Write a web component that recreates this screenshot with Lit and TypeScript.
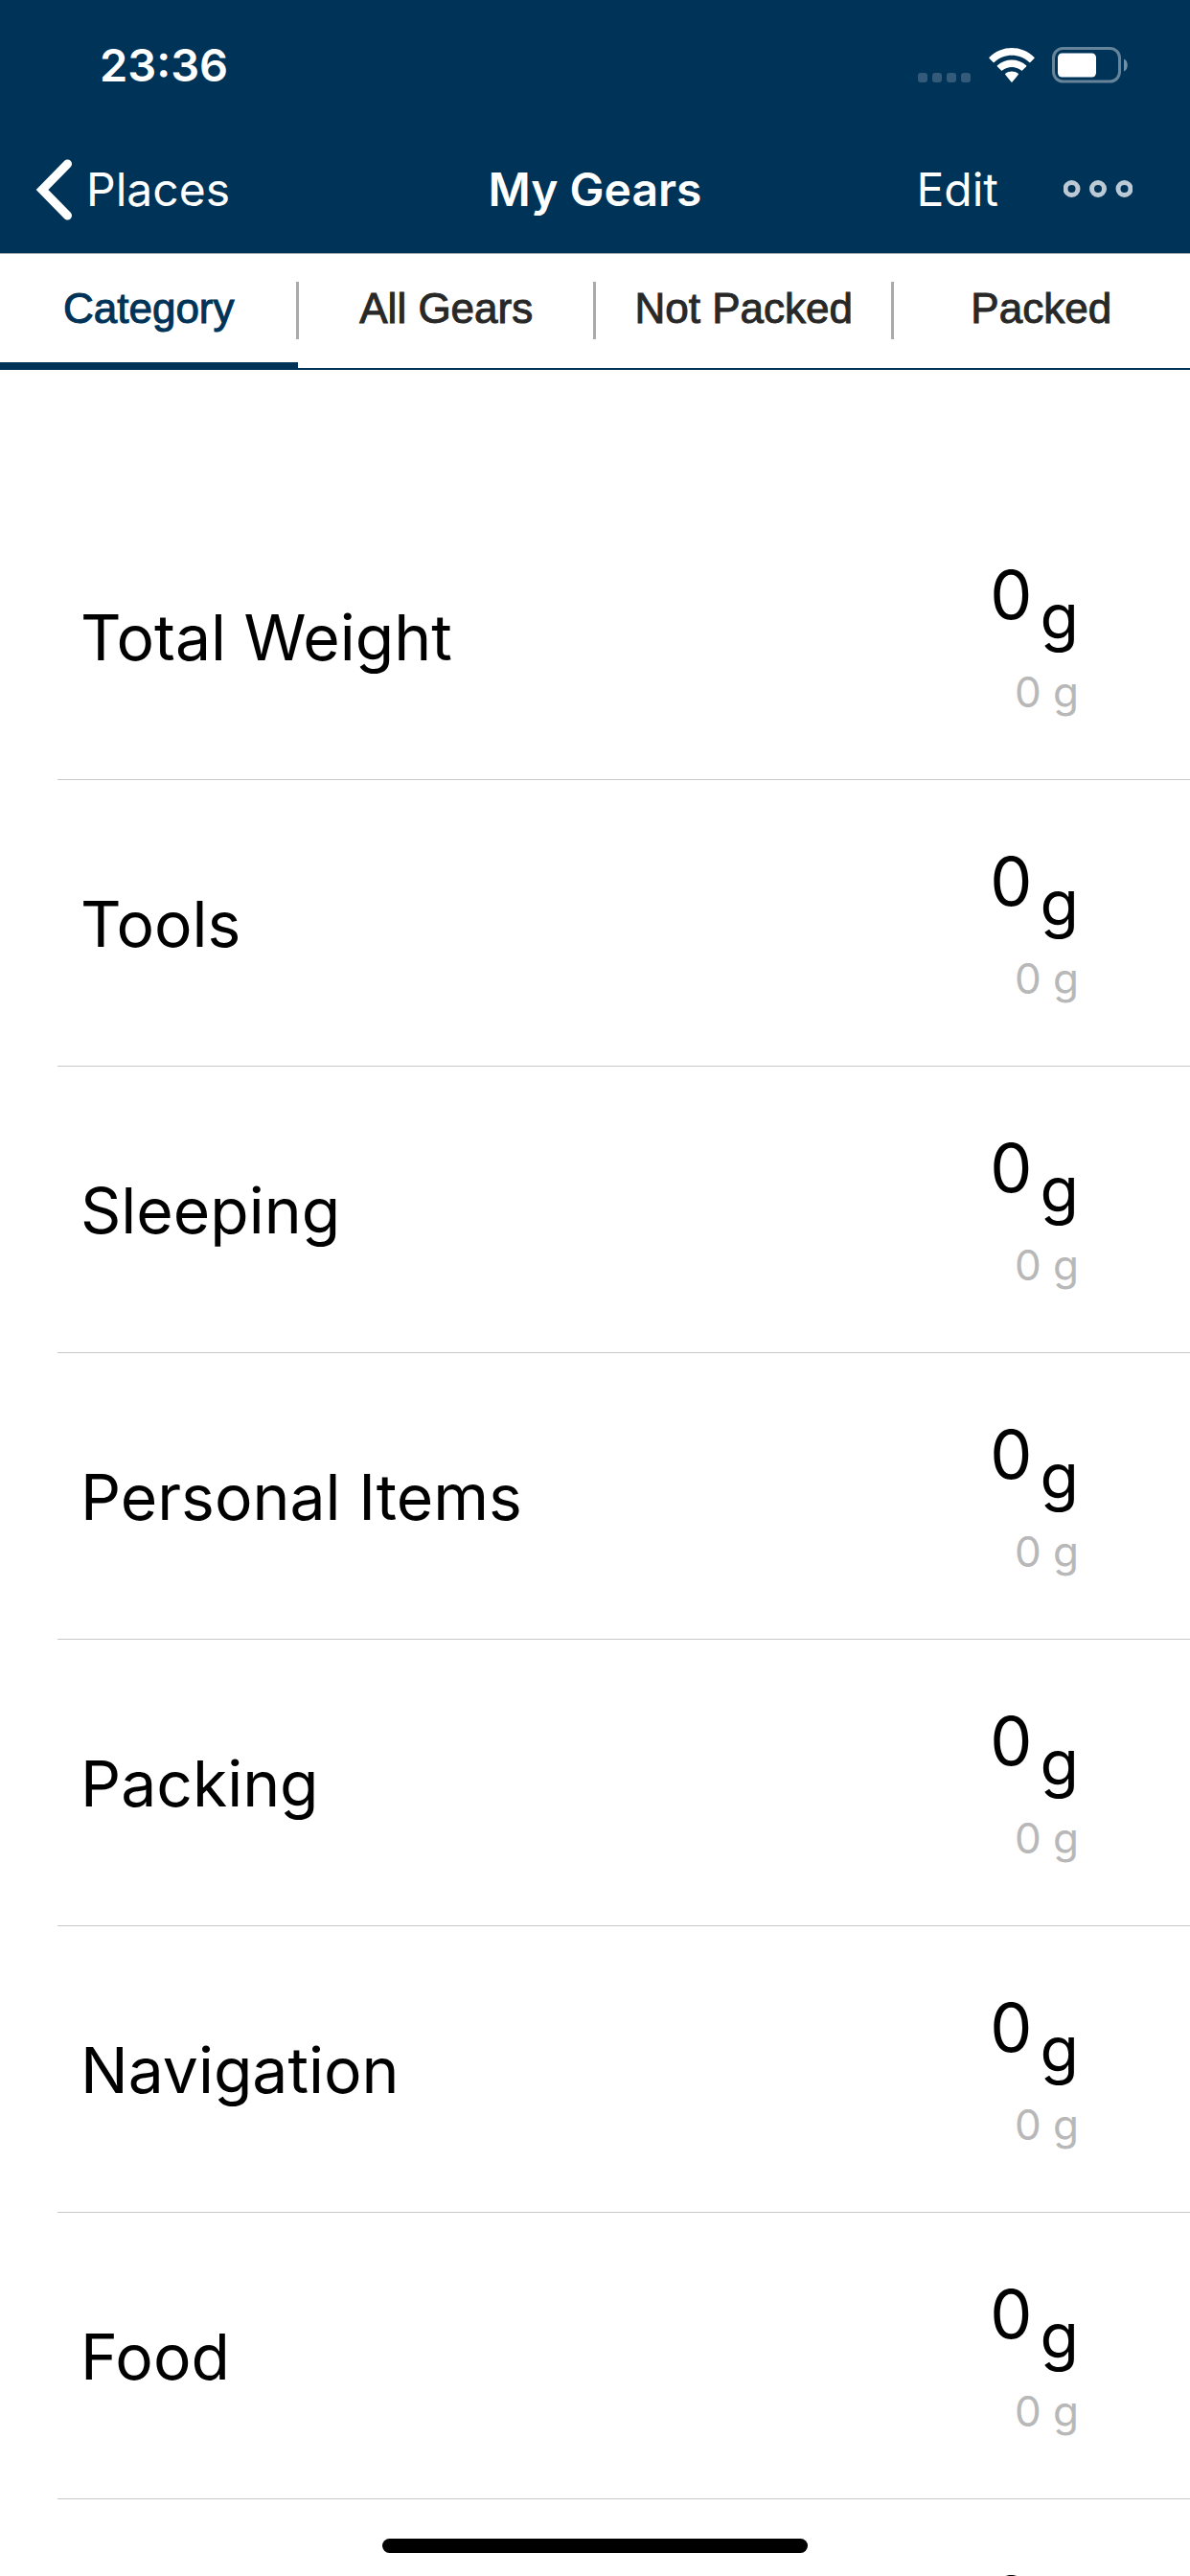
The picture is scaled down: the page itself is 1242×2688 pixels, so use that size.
import { LitElement, html, css, svg } from "lit";
import { customElement, property, state } from "lit/decorators.js";
import { classMap } from "lit/directives/class-map.js";

interface Gear {
  name: string;
  total: number;
  packed: number;
}

const CATEGORIES: Gear[] = [
  "Total Weight",
  "Tools",
  "Sleeping",
  "Personal Items",
  "Packing",
  "Navigation",
  "Food",
  "",
].map((name) => ({ name, total: 0, packed: 0 }));

const TABS = ["Category", "All Gears", "Not Packed", "Packed"];

@customElement("status-bar")
export class StatusBar extends LitElement {
  static styles = css`
    :host {
      display: flex;
      justify-content: space-between;
      align-items: center;
      height: 132px;
      padding: 4px 64px 0 104px;
      box-sizing: border-box;
    }
    .time {
      font-size: 47px;
      line-height: 60px;
      font-weight: 600;
    }
    .icons {
      display: flex;
      align-items: center;
      gap: 18px;
    }
    .icon {
      display: block;
    }
  `;

  render() {
    return html`
      <span class="time">23:36</span>
      <div class="icons">
        <svg class="icon" width="56" height="38" viewBox="0 0 56 38" fill="#fff" fill-opacity="0.2" aria-hidden="true">
          ${[0, 15, 30, 45].map((x) => svg`<rect x=${x} y="27" width="10" height="10" rx="3"></rect>`)}
        </svg>
        <svg class="icon" width="48" height="38" viewBox="0 0 48 38" fill="#fff" aria-hidden="true">
          <path d="M0.6 10.8 C13.5 -2.3 34.5 -2.3 47.4 10.8 Q47.9 11.4 47.4 11.9 L43.4 15.9 Q42.8 16.4 42.2 15.9 C31.9 6.4 16.1 6.4 5.8 15.9 Q5.2 16.4 4.6 15.9 L0.6 11.9 Q0.1 11.4 0.6 10.8Z"></path>
          <path d="M8.9 19.3 C17.4 11.7 30.6 11.7 39.1 19.3 Q39.6 19.9 39.1 20.4 L35 24.5 Q34.5 25 33.9 24.5 C28.2 19.7 19.8 19.7 14.1 24.5 Q13.5 25 13 24.5 L8.9 20.4 Q8.4 19.9 8.9 19.3Z"></path>
          <path d="M17.3 27.7 C21.2 24.6 26.8 24.6 30.7 27.7 Q31.2 28.3 30.7 28.9 L24.6 36.5 Q24 37.1 23.4 36.5 L17.3 28.9 Q16.8 28.3 17.3 27.7Z"></path>
        </svg>
        <svg class="icon" width="80" height="38" viewBox="0 0 80 38" aria-hidden="true">
          <rect x="1.5" y="1.5" width="69" height="34.5" rx="10" fill="none" stroke="#fff" stroke-opacity="0.4" stroke-width="3"></rect>
          <rect x="6" y="6.5" width="40" height="25" rx="4.5" fill="#fff"></rect>
          <path d="M75 12.5 C80 14.5 80 23.5 75 25.5Z" fill="#fff" fill-opacity="0.45"></path>
        </svg>
      </div>
    `;
  }
}

@customElement("nav-bar")
export class NavBar extends LitElement {
  static styles = css`
    :host {
      display: grid;
      grid-template-columns: 1fr auto 1fr;
      align-items: center;
      height: 132px;
      padding: 0 36px;
      box-sizing: border-box;
      font-size: 48px;
      line-height: 60px;
    }
    .back,
    .action {
      display: flex;
      align-items: center;
      border: 0;
      padding: 0;
      background: none;
      color: inherit;
      font: inherit;
      text-decoration: none;
    }
    .back {
      gap: 12px;
      justify-self: start;
    }
    .title {
      margin: 0;
      font-size: 48px;
      line-height: 60px;
      font-weight: 600;
    }
    .actions {
      display: flex;
      align-items: center;
      justify-content: flex-end;
      gap: 68px;
      padding-right: 24px;
    }
    .icon {
      display: block;
    }
  `;

  render() {
    return html`
      <a class="back" href="#places">
        <svg class="icon" width="42" height="66" viewBox="0 0 42 66" fill="none" stroke="#fff" stroke-width="9" stroke-linecap="round" aria-hidden="true">
          <path d="M34.5 6 L8 33 L34.5 60"></path>
        </svg>
        <span>Places</span>
      </a>
      <h1 class="title">My Gears</h1>
      <div class="actions">
        <button class="action" type="button">Edit</button>
        <button class="action" type="button" aria-label="More">
          <svg class="icon" width="72" height="22" viewBox="0 0 72 22" fill="none" stroke="#bccad5" stroke-width="5" aria-hidden="true">
            ${[8.5, 36, 63.5].map((x) => svg`<circle cx=${x} cy="10" r="6.5"></circle>`)}
          </svg>
        </button>
      </div>
    `;
  }
}

@customElement("gear-row")
export class GearRow extends LitElement {
  static styles = css`
    :host {
      display: flex;
      align-items: center;
      justify-content: space-between;
      height: 299px;
      margin-left: 60px;
      padding: 0 116px 0 24px;
      box-sizing: border-box;
      border-bottom: 1px solid #c8c7cc;
    }
    .name {
      padding-top: 2px;
      font-size: 66px;
      line-height: 84px;
    }
    .weights {
      display: flex;
      flex-direction: column;
      flex: 1;
      align-items: flex-end;
      gap: 10px;
    }
    .total {
      display: flex;
      gap: 8px;
      font-size: 70px;
      line-height: 84px;
    }
    .unit {
      padding-top: 22px;
      font-size: 66px;
    }
    .packed {
      color: #b8b8b8;
      font-size: 44px;
      line-height: 54px;
    }
  `;

  @property({ attribute: false }) gear!: Gear;

  render() {
    return html`
      <span class="name">${this.gear.name}</span>
      <div class="weights">
        <span class="total"><span>${this.gear.total}</span><span class="unit">g</span></span>
        <span class="packed">${this.gear.packed} g</span>
      </div>
    `;
  }
}

@customElement("app-root")
export class AppRoot extends LitElement {
  static styles = css`
    :host {
      display: flex;
      flex-direction: column;
      position: relative;
      height: 100vh;
      overflow: hidden;
      background: #fff;
      color: #000;
      font-family: Inter, "Liberation Sans", sans-serif;
    }
    .header {
      flex: none;
      background: #003358;
      color: #fff;
      border-bottom: 1px solid #a0a8ae;
    }
    .tabs {
      display: grid;
      grid-template-columns: repeat(4, 1fr);
      flex: none;
      height: 121px;
      box-sizing: border-box;
      border-bottom: 2px solid #003358;
    }
    .tab {
      display: flex;
      align-items: center;
      justify-content: center;
      position: relative;
      padding: 0 0 6px;
      border: 0;
      background: none;
      color: #282828;
      font-family: "Liberation Sans", Arial, sans-serif;
      font-size: 44px;
      line-height: 50px;
      -webkit-text-stroke: 1px currentColor;
    }
    .tab + .tab::before {
      content: "";
      position: absolute;
      left: -2px;
      top: 29px;
      width: 3px;
      height: 60px;
      background: #aaa;
    }
    .selected {
      color: #003358;
    }
    .selected::after {
      content: "";
      position: absolute;
      left: 0;
      right: 0;
      bottom: 0;
      height: 6px;
      background: #003358;
    }
    .list {
      flex: 1;
      min-height: 0;
      margin: 0;
      padding: 129px 0 0;
      list-style: none;
      overflow-y: auto;
      scrollbar-width: none;
    }
    .home {
      position: absolute;
      left: 50%;
      bottom: 24px;
      width: 444px;
      height: 15px;
      margin-left: -222px;
      border-radius: 8px;
      background: #000;
    }
  `;

  @state() private selected = 0;

  render() {
    return html`
      <header class="header">
        <status-bar></status-bar>
        <nav-bar></nav-bar>
      </header>
      <nav class="tabs">
        ${TABS.map(
          (label, i) => html`<button
            type="button"
            class=${classMap({ tab: true, selected: i === this.selected })}
            @click=${() => (this.selected = i)}
          >${label}</button>`,
        )}
      </nav>
      <ul class="list">
        ${CATEGORIES.map((gear) => html`<li><gear-row .gear=${gear}></gear-row></li>`)}
      </ul>
      <div class="home"></div>
    `;
  }
}
